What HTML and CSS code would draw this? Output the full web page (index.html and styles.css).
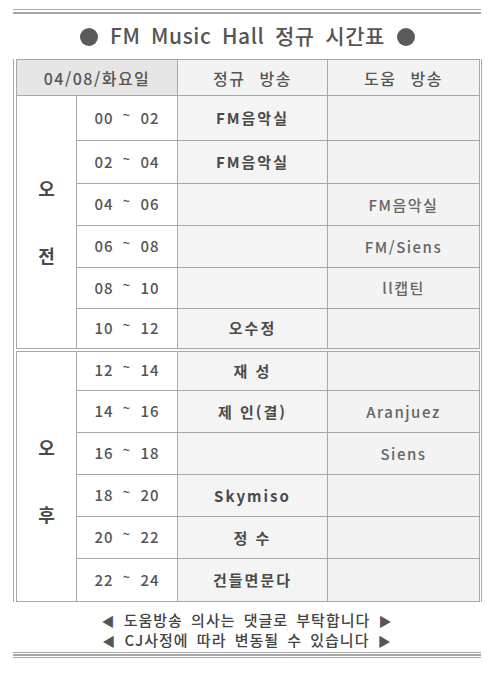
FILE: index.html
```html
<!DOCTYPE html>
<html lang="ko">
<head>
<meta charset="utf-8">
<link rel="stylesheet" href="styles.css">
</head>
<body>
<div class="page">
  <div class="rule rule-top"></div>
  <h1 class="title"><span class="dot"></span><span class="title-text">FM Music Hall 정규 시간표</span><span class="dot"></span></h1>
  <div class="frame">
    <table class="sched">
      <colgroup>
        <col class="c1"><col class="c2"><col class="c3"><col class="c4">
      </colgroup>
      <thead>
        <tr class="head">
          <th colspan="2" class="date">04/08/화요일</th>
          <th class="hd">정규 방송</th>
          <th class="hd">도움 방송</th>
        </tr>
      </thead>
      <tbody class="am">
        <tr class="r45"><td rowspan="6" class="label"><span>오</span><span>전</span></td><td class="time">00 <span class="t">~</span> 02</td><td class="prog">FM음악실</td><td class="help"></td></tr>
        <tr class="r43"><td class="time">02 <span class="t">~</span> 04</td><td class="prog">FM음악실</td><td class="help"></td></tr>
        <tr class="r42"><td class="time">04 <span class="t">~</span> 06</td><td class="prog"></td><td class="help">FM음악실</td></tr>
        <tr class="r42"><td class="time">06 <span class="t">~</span> 08</td><td class="prog"></td><td class="help">FM/Siens</td></tr>
        <tr class="r41"><td class="time">08 <span class="t">~</span> 10</td><td class="prog"></td><td class="help">ll캡틴</td></tr>
        <tr class="r41"><td class="time">10 <span class="t">~</span> 12</td><td class="prog">오수정</td><td class="help"></td></tr>
      </tbody>
      <tbody class="pm">
        <tr class="r41 first"><td rowspan="6" class="label"><span>오</span><span>후</span></td><td class="time">12 <span class="t">~</span> 14</td><td class="prog">재 성</td><td class="help"></td></tr>
        <tr class="r42"><td class="time">14 <span class="t">~</span> 16</td><td class="prog">제 인(결)</td><td class="help">Aranjuez</td></tr>
        <tr class="r42"><td class="time">16 <span class="t">~</span> 18</td><td class="prog"></td><td class="help">Siens</td></tr>
        <tr class="r42"><td class="time">18 <span class="t">~</span> 20</td><td class="prog">Skymiso</td><td class="help"></td></tr>
        <tr class="r42"><td class="time">20 <span class="t">~</span> 22</td><td class="prog">정 수</td><td class="help"></td></tr>
        <tr class="r43"><td class="time">22 <span class="t">~</span> 24</td><td class="prog">건들면문다</td><td class="help"></td></tr>
      </tbody>
    </table>
  </div>
  <div class="notes">
    <p><span class="tri">◀</span> 도움방송 의사는 댓글로 부탁합니다 <span class="tri">▶</span></p>
    <p><span class="tri">◀</span> CJ사정에 따라 변동될 수 있습니다 <span class="tri">▶</span></p>
  </div>
  <div class="rule rule-bottom"></div>
</div>
</body>
</html>
```

FILE: styles.css
```css
* { box-sizing: border-box; }
html, body { margin: 0; padding: 0; background: #fff; }
body {
  font-family: "Noto Sans CJK KR", "Noto Sans", sans-serif;
  color: #555;
}
.page {
  width: 494px;
  padding: 9px 12px 0 13px;
}
.rule { width: 468px; }
.rule-top {
  border-top: 1px solid #a8a8a8;
  border-bottom: 2px solid #a8a8a8;
  height: 5px;
  padding-top: 2px;
}
.title {
  margin: 0;
  height: 45px;
  display: flex;
  align-items: center;
  justify-content: center;
  gap: 12px;
  font-size: 21px;
  font-weight: 500;
  color: #555;
  letter-spacing: 0.6px;
  word-spacing: 4px;
}
.title-text { line-height: 1; padding-bottom: 2px; }
.dot {
  width: 18px;
  height: 18px;
  border-radius: 50%;
  background: #5a5a5a;
  display: inline-block;
}
.frame {
  width: 469px;
  border-left: 1px solid #a8a8a8;
  border-right: 1px solid #a8a8a8;
  padding: 0 2px;
}
.sched {
  width: 463px;
  border-collapse: collapse;
  table-layout: fixed;
}
.c1 { width: 60px; }
.c2 { width: 101px; }
.c3 { width: 150px; }
.c4 { width: 152px; }
.sched th, .sched td {
  border: 1px solid #a8a8a8;
  padding: 0;
  text-align: center;
  vertical-align: middle;
  font-size: 15px;
  line-height: 18px;
  font-weight: 500;
}
.head { height: 36px; }
.head th { color: #555; font-size: 16px; letter-spacing: 1.5px; word-spacing: 8px; }
.date { background: #e6e6e6; }
.hd { background: #f3f3f3; }
.r45 { height: 45px; }
.r43 { height: 43px; }
.r42 { height: 42px; }
.r41 { height: 41px; }
.pm .first td { border-top: 4px double #a8a8a8; }
.sched .label {
  background: #fff;
  font-size: 18px;
  font-weight: 700;
  color: #4a4a4a;
}
.label span { display: block; line-height: 20px; }
.label span + span { margin-top: 47px; }
.pm .label span:first-child { margin-top: 8px; }
.time { background: #fff; color: #555; letter-spacing: 1px; }
.time .t { display: inline-block; font-size: 13px; position: relative; top: -4px; margin: 0 4px; }
.sched .prog {
  background: #f4f4f4;
  font-weight: 700;
  color: #4a4a4a;
  letter-spacing: 2px;
}
.help {
  background: #f3f3f3;
  color: #666;
  letter-spacing: 1.5px;
}
.notes {
  width: 468px;
  padding-top: 8px;
  text-align: center;
  color: #444;
  font-size: 15px;
  font-weight: 500;
  letter-spacing: 1px;
  word-spacing: 3px;
}
.notes p { margin: 0; line-height: 19px; }
.tri { font-size: 13px; color: #555; }
.rule-bottom {
  margin-top: 2px;
  border-top: 1px solid #a8a8a8;
  border-bottom: 1px solid #a8a8a8;
  height: 6px;
  padding-top: 1px;
}
.rule-bottom::after {
  content: "";
  display: block;
  height: 2px;
  background: #a8a8a8;
}
```
